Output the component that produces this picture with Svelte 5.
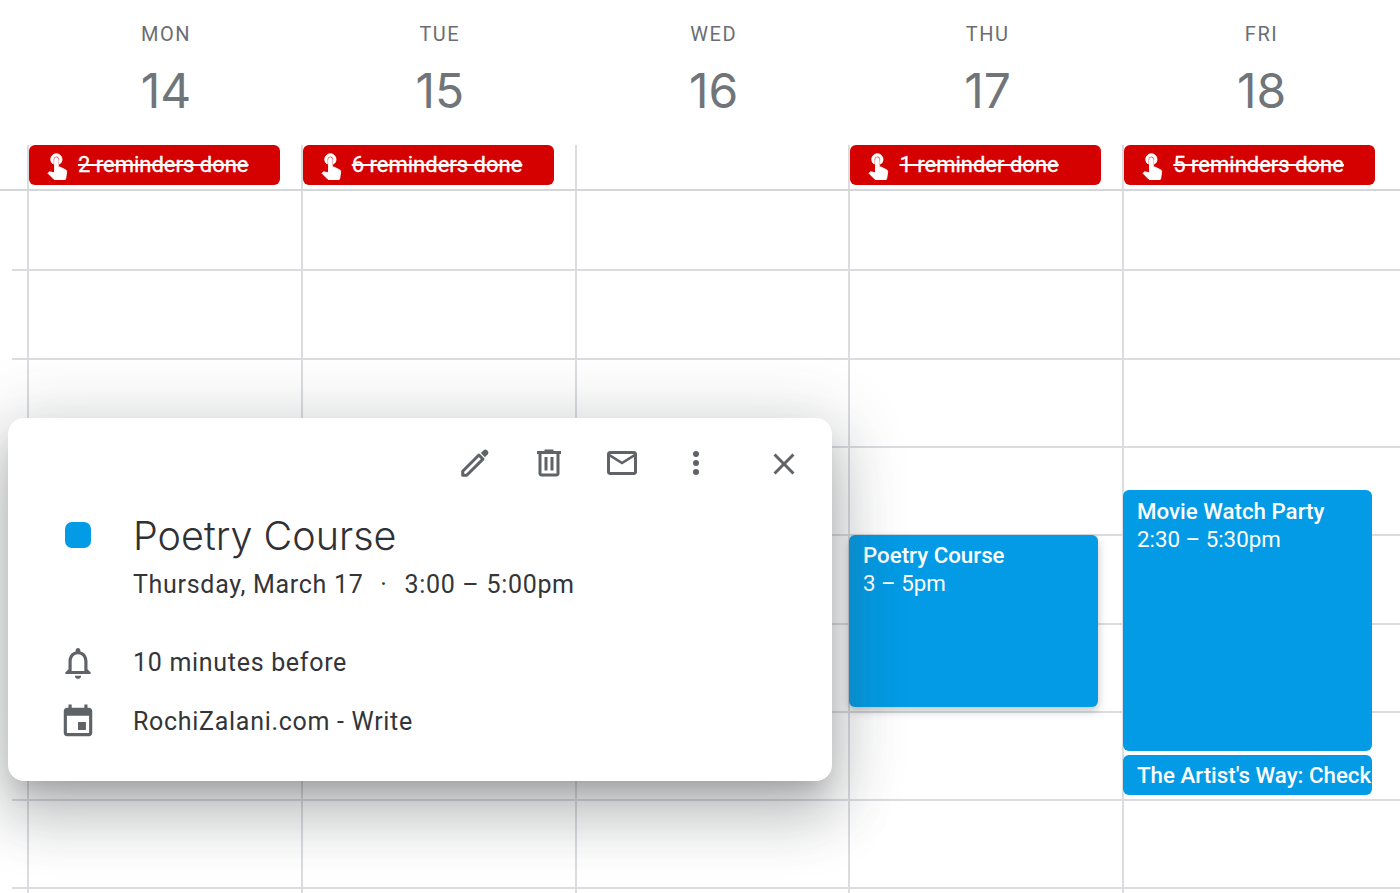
<script>
	const days = [
		{ name: 'MON', num: 14, reminders: '2 reminders done' },
		{ name: 'TUE', num: 15, reminders: '6 reminders done' },
		{ name: 'WED', num: 16, reminders: '' },
		{ name: 'THU', num: 17, reminders: '1 reminder done' },
		{ name: 'FRI', num: 18, reminders: '5 reminders done' }
	];
	const hours = [0, 1, 2, 3, 4, 5, 6, 7, 8];
	const touch = 'M9 11.24V7.5C9 6.12 10.12 5 11.5 5S14 6.12 14 7.5v3.74c1.21-.81 2-2.18 2-3.74C16 5.01 13.99 3 11.5 3S7 5.01 7 7.5c0 1.56.79 2.93 2 3.74zm9.84 4.63l-4.54-2.26c-.17-.07-.35-.11-.54-.11H13v-6c0-.83-.67-1.5-1.5-1.5S10 6.67 10 7.5v10.74l-3.43-.72c-.08-.01-.15-.03-.24-.03-.31 0-.59.13-.79.33l-.79.8 4.94 4.94c.27.27.65.44 1.06.44h6.79c.75 0 1.33-.55 1.44-1.28l.75-5.27c.01-.07.02-.14.02-.2 0-.62-.38-1.16-.91-1.38z';
</script>

<div class="cal">
	<div class="head">
		{#each days as d}
			<div class="day">
				<div class="name">{d.name}</div>
				<div class="num">{d.num}</div>
			</div>
		{/each}
	</div>

	<div class="allday">
		{#each days as d}
			<div class="slot">
				{#if d.reminders}
					<div class="chip">
						<svg viewBox="0 0 24 24" width="30" height="30"><path fill="#fff" stroke="#fff" stroke-width=".7" d={touch}/></svg>
						<span>{d.reminders}</span>
					</div>
				{/if}
			</div>
		{/each}
	</div>

	<div class="body">
		{#each hours as h}
			<div class="row">
				{#each days as d}<div class="cell"></div>{/each}
			</div>
		{/each}

		<div class="event poetry">
			<b>Poetry Course</b>
			<span>3 – 5pm</span>
		</div>
		<div class="event movie">
			<b>Movie Watch Party</b>
			<span>2:30 – 5:30pm</span>
		</div>
		<div class="event artist">
			<b>The Artist's Way: Check-in</b>
		</div>
	</div>

	<div class="pop">
		<div class="tools">
			<svg viewBox="0 0 24 24" class="t">
				<path class="pen" d="M3.8 20.2v-2.7L14.6 6.7l2.7 2.7L6.5 20.2z"/>
				<path d="M15.9 5.4l1.9-1.9a1.6 1.6 0 0 1 2.2 0l.5.5a1.6 1.6 0 0 1 0 2.2l-1.9 1.9z"/>
			</svg>
			<svg viewBox="0 0 24 24" class="t"><path d="M15 4V3H9v1H4v2h1v13c0 1.1.9 2 2 2h10c1.1 0 2-.9 2-2V6h1V4h-5zm2 15H7V6h10v13zM9 8h2v9H9zm4 0h2v9h-2z"/></svg>
			<svg viewBox="0 0 24 24" class="t"><path d="M20 4H4c-1.1 0-1.99.9-1.99 2L2 18c0 1.1.9 2 2 2h16c1.1 0 2-.9 2-2V6c0-1.1-.9-2-2-2zm0 14H4V8l8 5 8-5v10zm-8-7L4 6h16l-8 5z"/></svg>
			<svg viewBox="0 0 24 24" class="t"><circle cx="12" cy="6" r="2"/><circle cx="12" cy="12" r="2"/><circle cx="12" cy="18" r="2"/></svg>
			<svg viewBox="0 0 24 24" class="t close"><path d="M19 6.41L17.59 5 12 10.59 6.41 5 5 6.41 10.59 12 5 17.59 6.41 19 12 13.41 17.59 19 19 17.59 13.41 12z"/></svg>
		</div>
		<div class="line title-line">
			<div class="ic"><div class="swatch"></div></div>
			<div>
				<div class="title">Poetry Course</div>
				<div class="when">Thursday, March 17 <i>·</i> 3:00 – 5:00pm</div>
			</div>
		</div>
		<div class="line bell">
			<div class="ic">
				<svg viewBox="0 0 24 24" class="i"><path d="M12 22c1.1 0 2-.9 2-2h-4c0 1.1.9 2 2 2zm6-6v-5c0-3.07-1.63-5.64-4.5-6.32V4c0-.83-.67-1.5-1.5-1.5s-1.5.67-1.5 1.5v.68C7.64 5.36 6 7.92 6 11v5l-2 2v1h16v-1l-2-2zm-2 1H8v-6c0-2.48 1.51-4.5 4-4.5s4 2.02 4 4.5v6z"/></svg>
			</div>
			<div class="txt">10 minutes before</div>
		</div>
		<div class="line owner">
			<div class="ic">
				<svg viewBox="0 0 24 24" class="i"><path d="M17 12h-5v5h5v-5zM16 1v2H8V1H6v2H5c-1.11 0-1.99.9-1.99 2L3 19c0 1.1.89 2 2 2h14c1.1 0 2-.9 2-2V5c0-1.1-.9-2-2-2h-1V1h-2zm3 18H5V8h14v11z"/></svg>
			</div>
			<div class="txt">RochiZalani.com - Write</div>
		</div>
	</div>
</div>

<style>
	:global(body) {
		margin: 0;
		background: #fff;
		overflow: hidden;
	}

	.cal {
		position: relative;
		width: 1400px;
		height: 893px;
		overflow: hidden;
		font-family: Roboto, sans-serif;
		color: #3c4043;
	}

	.head {
		display: grid;
		grid-template-columns: repeat(5, 273.9px);
		padding-left: 29px;
		height: 145px;
	}

	.day {
		text-align: center;
		color: #70757a;
	}

	.name {
		padding-top: 22px;
		font-size: 20px;
		line-height: 24px;
		letter-spacing: 1.5px;
		color: #6a6e73;
	}

	.num {
		margin-top: 17px;
		font-family: Inter, sans-serif;
		font-weight: 400;
		font-size: 48px;
		line-height: 56px;
	}

	.allday {
		display: grid;
		grid-template-columns: repeat(5, 273.85px);
		padding-left: 26.9px;
		height: 44px;
		border-bottom: 2px solid #d5d6d9;
	}

	.slot {
		border-left: 2px solid #dadce0;
	}

	.chip {
		display: flex;
		align-items: center;
		gap: 6px;
		box-sizing: border-box;
		width: 251px;
		height: 40px;
		padding-left: 13px;
		background: #d50000;
		border-radius: 6px;
		color: #fff;
		font-size: 22px;
		font-weight: 400;
		text-decoration: line-through;
	}

	.chip span {
		margin-top: -2px;
		-webkit-text-stroke: .3px #fff;
	}

	.body {
		position: relative;
	}

	.row {
		display: grid;
		grid-template-columns: repeat(5, 273.85px);
		box-sizing: border-box;
		height: 88.3px;
		padding-left: 14.9px;
		margin-left: 12px;
		border-bottom: 2px solid #dadce0;
	}

	.row:first-child {
		height: 80.4px;
	}

	.cell {
		border-left: 2px solid #dadce0;
	}

	.event {
		position: absolute;
		box-sizing: border-box;
		width: 249px;
		padding: 7px 0 0 14px;
		overflow: hidden;
		background: #039be5;
		border-radius: 6px;
		color: #fff;
		font-size: 22.3px;
		line-height: 28px;
		white-space: nowrap;
	}

	.event b {
		display: block;
		font-weight: 500;
	}

	.event span {
		display: block;
	}

	.poetry {
		left: 849px;
		top: 344px;
		height: 172px;
		padding-top: 6px;
		box-shadow: 0 4px 8px rgba(60, 64, 67, .3);
	}

	.movie {
		left: 1123px;
		top: 299px;
		height: 261px;
	}

	.artist {
		left: 1123px;
		top: 564px;
		height: 40px;
		padding-top: 6px;
	}

	.pop {
		position: absolute;
		left: 8px;
		top: 418px;
		box-sizing: border-box;
		width: 824px;
		height: 363px;
		background: #fff;
		border-radius: 16px;
		box-shadow: 0 36px 57px 4px rgba(60, 64, 67, .22), 0 10px 69px 10px rgba(60, 64, 67, .2), 0 16px 22px -10px rgba(60, 64, 67, .25);
	}

	.tools {
		display: flex;
		justify-content: flex-end;
		gap: 37.5px;
		padding: 27px 30px 0 0;
	}

	.t {
		width: 36px;
		height: 36px;
		fill: #5f6368;
	}

	.pen {
		fill: none;
		stroke: #5f6368;
		stroke-width: 2;
		stroke-linejoin: round;
	}

	.close {
		margin: 1px 0 0 15px;
	}

	.line {
		display: flex;
	}

	.ic {
		flex: none;
		display: flex;
		justify-content: center;
		box-sizing: border-box;
		width: 125px;
		padding-left: 15px;
	}

	.swatch {
		width: 26px;
		height: 26px;
		margin-top: 11px;
		background: #039be5;
		border-radius: 7px;
	}

	.title-line {
		margin-top: 29px;
	}

	.title {
		font-family: Inter, sans-serif;
		font-size: 39.5px;
		line-height: 50px;
		font-weight: 300;
		color: #303134;
	}

	.when {
		margin-top: 7px;
		font-size: 25px;
		line-height: 34px;
		letter-spacing: .7px;
		color: #333538;
	}

	.when i {
		font-style: normal;
		padding: 0 10px;
	}

	.i {
		width: 38px;
		height: 38px;
		margin-top: 2px;
		fill: #5f6368;
	}

	.bell {
		margin-top: 40px;
		align-items: center;
	}

	.owner {
		margin-top: 19px;
		align-items: center;
	}

	.txt {
		font-size: 25px;
		letter-spacing: .7px;
		color: #333538;
	}
</style>
